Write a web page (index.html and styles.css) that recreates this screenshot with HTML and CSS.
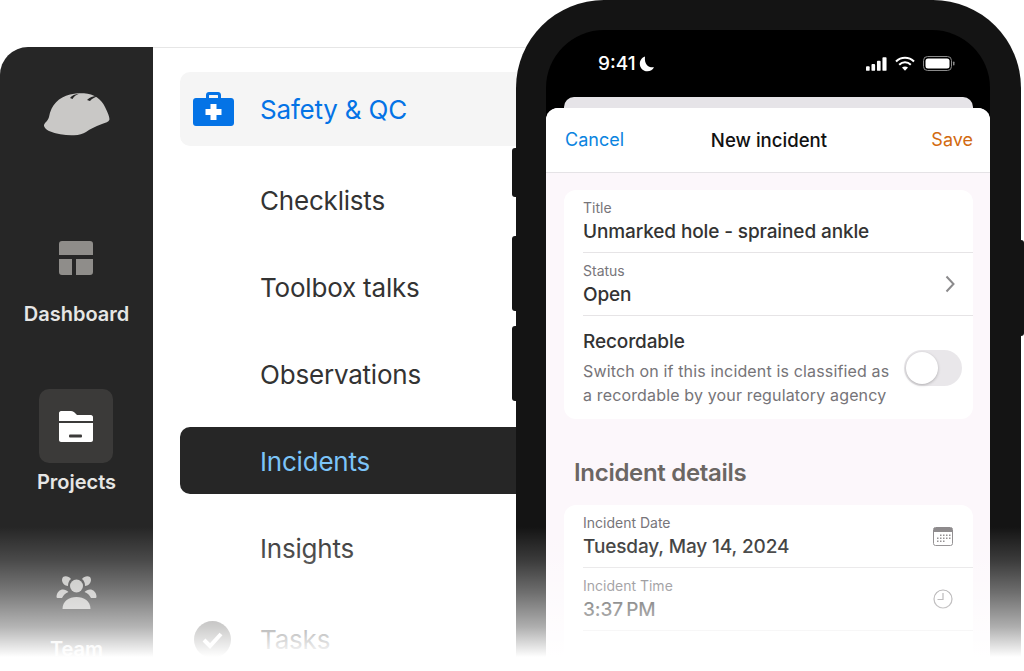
FILE: index.html
```html
<!DOCTYPE html>
<html lang="en">
<head>
<meta charset="utf-8">
<title>New incident</title>
<link rel="stylesheet" href="styles.css">
</head>
<body>
<div class="canvas">
  <section class="panel">
    <nav class="rail">
      <svg class="logo" viewBox="0 0 66 44" aria-hidden="true"><path fill="#c9c8c6" d="M0 32C1 29 4 28 5 24C7 12 15 4 26 1.500C31 0.300 36 0 40 0.300C50 1 57 6 61 14C64 20 66 25 65.300 27C64.500 29 62 29.500 58 31C52 33 46 36 42 39C39 41 35 42 30 42.300C23 42.700 13 41.500 5 38C2 36.700 -0.500 34 0 32Z"/><path fill="#262626" d="M26 5C28 2.500 31 1 35 0.800C32 2 30 3.500 28.500 6C27.500 5.700 27 5.300 26 5ZM43 7C46 4 50 2.500 55 3C51 4 48 5.500 46 8C45 7.500 44 7.200 43 7Z"/></svg>
      <a class="rail-item rail-dash">
        <span class="rail-icon"><svg viewBox="0 0 34 34" width="34" height="34" aria-hidden="true"><path fill="#8f8d8a" d="M3 0H31A3 3 0 0 1 34 3V14H0V3A3 3 0 0 1 3 0ZM0 18H13V34H3A3 3 0 0 1 0 31ZM17 18H34V31A3 3 0 0 1 31 34H17Z"/></svg></span>
        <span class="rail-label">Dashboard</span>
      </a>
      <a class="rail-item rail-projects">
        <span class="rail-icon rail-icon-active"><svg viewBox="0 0 34 31" width="34" height="31" aria-hidden="true"><path fill="#fff" d="M2 0H12C14 0 15 1 16 2L18 4H32C33 4 34 5 34 6V10H0V2C0 1 1 0 2 0ZM0 12H34V29C34 30 33 31 32 31H2C1 31 0 30 0 29Z"/><rect x="10" y="23.500" width="13" height="3" rx="1" fill="#3b3a39"/></svg></span>
        <span class="rail-label rail-label-strong">Projects</span>
      </a>
      <a class="rail-item rail-team">
        <span class="rail-icon"><svg viewBox="0 0 41 34" width="41" height="34" aria-hidden="true"><g fill="#bdbcba"><circle cx="20.500" cy="10" r="6.500"/><path d="M6.500 33C6.500 25 13 21 20.500 21S34.500 25 34.500 33Z"/><path d="M7 1C9 -0.500 13 0 15 3C13 4.500 12 7 12 10C9 10 6 7 6 4C6 3 6.300 2 7 1Z"/><path d="M34 1C32 -0.500 28 0 26 3C28 4.500 29 7 29 10C32 10 35 7 35 4C35 3 34.700 2 34 1Z"/><path d="M0.500 21C0.500 16 4 13.500 7 13.500C9 13.500 11 14.500 12.500 16C9.500 17 7.500 19 6 22H2C1 22 0.500 21.500 0.500 21Z"/><path d="M40.500 21C40.500 16 37 13.500 34 13.500C32 13.500 30 14.500 28.500 16C31.500 17 33.500 19 35 22H39C40 22 40.500 21.500 40.500 21Z"/></g></svg></span>
        <span class="rail-label">Team</span>
      </a>
    </nav>
    <div class="menu">
      <a class="menu-item menu-current">
        <svg class="menu-icon" viewBox="0 0 41 34" width="41" height="34" aria-hidden="true"><path fill="#0473e6" fill-rule="evenodd" d="M13 6V3C13 1.300 14.300 0 16 0H25C26.700 0 28 1.300 28 3V6H38C39.700 6 41 7.300 41 9V31C41 32.700 39.700 34 38 34H3C1.300 34 0 32.700 0 31V9C0 7.300 1.300 6 3 6ZM16 6H25V3.500C25 3.200 24.800 3 24.500 3H16.500C16.200 3 16 3.200 16 3.500Z"/><path fill="#fff" d="M17.500 12H23.500V17H28.500V23H23.500V28H17.500V23H12.500V17H17.500Z"/></svg>
        <span>Safety &amp; QC</span>
      </a>
      <a class="menu-item">Checklists</a>
      <a class="menu-item">Toolbox talks</a>
      <a class="menu-item">Observations</a>
      <a class="menu-item menu-selected">Incidents</a>
      <a class="menu-item">Insights</a>
      <a class="menu-item menu-tasks">
        <svg class="menu-icon" viewBox="0 0 37 37" width="37" height="37" aria-hidden="true"><circle cx="18.500" cy="18.500" r="18.500" fill="#6f6e6c"/><path d="M10 19L16 25L27 13" fill="none" stroke="#fff" stroke-width="4"/></svg>
        <span>Tasks</span>
      </a>
    </div>
  </section>

  <section class="phone">
    <i class="side-btn btn-a"></i><i class="side-btn btn-b"></i><i class="side-btn btn-c"></i><i class="side-btn btn-d"></i>
    <div class="screen">
      <header class="status">
        <span class="clock">9:41</span>
        <svg class="moon" viewBox="0 0 16 16" width="16" height="16" aria-hidden="true"><path fill="#fff" d="M6 0.500C3 1.500 0.800 4.300 0.800 7.700C0.800 12 4.200 15.300 8.300 15.300C11.300 15.300 13.800 13.600 15 11.200C10 12 5 9 6 0.500Z"/></svg>
        <span class="status-icons">
          <svg viewBox="0 0 23 15" width="21" height="14" aria-hidden="true"><g fill="#fff"><rect x="0" y="10" width="4" height="5" rx="1"/><rect x="6" y="7.500" width="4" height="7.500" rx="1"/><rect x="12" y="4" width="4" height="11" rx="1"/><rect x="18" y="0" width="4.500" height="15" rx="1"/></g></svg>
          <svg viewBox="0 0 20 15" width="20" height="15" aria-hidden="true"><g fill="none" stroke="#fff" stroke-width="2"><path d="M1 5.500C6 0.500 14 0.500 19 5.500"/><path d="M4.200 8.700C7.500 5.500 12.500 5.500 15.800 8.700"/></g><path fill="#fff" d="M7 11.500C8.800 10 11.200 10 13 11.500L10 14.800Z"/></svg>
          <svg viewBox="0 0 32 15" width="32" height="15" aria-hidden="true"><rect x="0.500" y="0.500" width="28" height="14" rx="4" fill="none" stroke="#8a8a8a"/><rect x="2.500" y="2.500" width="24" height="10" rx="2.500" fill="#fff"/><rect x="30" y="5.500" width="1.500" height="4" rx="0.700" fill="#8a8a8a"/></svg>
        </span>
      </header>
      <div class="sheet-back"></div>
      <div class="sheet">
        <div class="nav">
          <span class="nav-cancel">Cancel</span>
          <strong class="nav-title">New incident</strong>
          <span class="nav-save">Save</span>
        </div>
        <div class="form">
          <div class="card">
            <div class="row">
              <div class="field"><span class="label">Title</span><span class="value">Unmarked hole - sprained ankle</span></div>
            </div>
            <div class="row">
              <div class="field"><span class="label">Status</span><span class="value">Open</span></div>
              <svg class="chev" viewBox="0 0 10 18" width="10" height="18" aria-hidden="true"><path d="M1.500 1.500L8.500 9L1.500 16.500" fill="none" stroke="#8b8a8c" stroke-width="2"/></svg>
            </div>
            <div class="row row-toggle">
              <div class="field">
                <span class="value value-plain">Recordable</span>
                <span class="desc">Switch on if this incident is classified as a recordable by your regulatory agency</span>
              </div>
              <span class="toggle"><span class="knob"></span></span>
            </div>
          </div>
          <h2 class="section-title">Incident details</h2>
          <div class="card">
            <div class="row">
              <div class="field"><span class="label">Incident Date</span><span class="value">Tuesday, May 14, 2024</span></div>
              <svg class="row-icon" viewBox="0 0 20 19" width="20" height="19" aria-hidden="true"><rect x="0.500" y="0.500" width="19" height="18" rx="2" fill="#fff" stroke="#8d8a8c"/><path d="M1 1H19V5H1Z" fill="#8d8a8c"/><g fill="#8d8a8c"><rect x="7" y="7.500" width="1.500" height="1.500"/><rect x="10" y="7.500" width="1.500" height="1.500"/><rect x="13" y="7.500" width="1.500" height="1.500"/><rect x="16" y="7.500" width="1.500" height="1.500"/><rect x="4" y="10.500" width="1.500" height="1.500"/><rect x="7" y="10.500" width="1.500" height="1.500"/><rect x="10" y="10.500" width="1.500" height="1.500"/><rect x="13" y="10.500" width="1.500" height="1.500"/><rect x="16" y="10.500" width="1.500" height="1.500"/><rect x="4" y="13.500" width="1.500" height="1.500"/><rect x="7" y="13.500" width="1.500" height="1.500"/><rect x="10" y="13.500" width="1.500" height="1.500"/></g></svg>
            </div>
            <div class="row">
              <div class="field"><span class="label">Incident Time</span><span class="value">3:37&#8201;PM</span></div>
              <svg class="row-icon" viewBox="0 0 20 20" width="20" height="20" aria-hidden="true"><circle cx="10" cy="10" r="9" fill="none" stroke="#8d8a8c" stroke-width="1.200"/><path d="M10 4V10.500H4.500" fill="none" stroke="#8d8a8c" stroke-width="1.200"/></svg>
            </div>
            <div class="row">
              <div class="field"><span class="label">Incident location</span></div>
            </div>
          </div>
        </div>
      </div>
    </div>
  </section>
  <div class="fade"></div>
</div>
</body>
</html>
```

FILE: styles.css
```css
* { box-sizing: border-box; }
html, body { margin: 0; height: 100%; background: #fff; overflow: hidden; }
body { font-family: Inter, "Liberation Sans", sans-serif; color: #262626; }
a { color: inherit; text-decoration: none; }
h2 { margin: 0; }

.canvas { position: relative; width: 1024px; height: 671px; overflow: hidden; }

/* background window */
.panel {
  position: absolute; left: 0; top: 47px; width: 540px; height: 624px;
  display: flex; border-top-left-radius: 28px;
  overflow: hidden; background: #fff;
}
.rail {
  width: 153px; flex: none; background: #262626; display: flex; flex-direction: column;
  align-items: center; padding-top: 46px;
}
.logo { width: 66px; height: 44px; flex: none; display: block; }
.rail-item { display: flex; flex-direction: column; align-items: center; flex: none; }
.rail-dash { margin-top: 104px; }
.rail-projects { margin-top: 61px; }
.rail-team { margin-top: 80px; }
.rail-icon { display: flex; align-items: center; justify-content: center; width: 74px; height: 74px; border-radius: 10px; flex: none; }
.rail-dash .rail-icon { height: 34px; }
.rail-team .rail-icon { height: 34px; }
.rail-icon-active { background: #3b3a39; }
.rail-label { font-size: 20px; line-height: 28px; font-weight: 600; color: #e6e6e5; margin-top: 25px; }
.rail-label-strong { margin-top: 5px; }
.rail-team .rail-label { margin-top: 25px; }

.menu { flex: 1; display: flex; flex-direction: column; padding: 24px 0 0 27px; border-top: 1px solid #e6e6e6; }
.menu-item {
  display: flex; align-items: center; flex: none; height: 67px; margin-bottom: 20px; padding: 2px 0 0 80px;
  font-size: 26px; line-height: 32px; color: #333; border-radius: 10px 0 0 10px; position: relative; letter-spacing: -0.2px;
}
.menu-current { height: 74px; margin-bottom: 20px; background: #f5f5f5; color: #0473e6; padding-left: 13px; }
.menu-current .menu-icon { margin: -2px 26px 0 0; flex: none; }
.menu-selected { background: #262626; color: #7cc4f8; }
.menu-tasks { padding-left: 14px; margin-top: 4px; }
.menu-tasks .menu-icon { margin-right: 29px; flex: none; }

/* phone */
.phone {
  position: absolute; left: 516px; top: 0; width: 505px; height: 760px;
  background: #141414; border-radius: 88px 88px 0 0; padding: 30px 31px 0 30px;
}
.side-btn { position: absolute; background: #141414; display: block; }
.btn-a { left: -4px; top: 148px; width: 4px; height: 49px; border-radius: 3px 0 0 3px; }
.btn-b { left: -4px; top: 236px; width: 4px; height: 75px; border-radius: 3px 0 0 3px; }
.btn-c { left: -4px; top: 326px; width: 4px; height: 75px; border-radius: 3px 0 0 3px; }
.btn-d { right: -3px; top: 240px; width: 3px; height: 96px; border-radius: 0 3px 3px 0; }
.screen {
  position: relative; height: 100%; background: #000; border-radius: 58px 58px 0 0; display: flex; flex-direction: column; overflow: hidden;
}
.status { display: flex; align-items: center; height: 67px; padding: 0 35px 0 52px; flex: none; }
.clock { color: #fff; font-size: 19px; font-weight: 500; line-height: 24px; }
.moon { margin-left: 3px; }
.status-icons { margin-left: auto; display: flex; align-items: center; gap: 8px; }
.sheet-back { height: 20px; margin: 0 17px -9px 18px; background: #e6e4e8; border-radius: 10px 10px 0 0; flex: none; }
.sheet { position: relative; flex: 1; background: #fcf7fb; border-radius: 12px 12px 0 0; overflow: hidden; }
.nav {
  display: grid; grid-template-columns: 1fr auto 1fr; align-items: center; height: 65px; padding: 0 17px 0 19px;
  background: #fff; border-bottom: 1px solid #e5e3e6; font-size: 18px; line-height: 24px;
}
.nav-cancel { color: #0a84e0; }
.nav-title { font-size: 18.6px; font-weight: 500; color: #111; }
.nav-save { color: #d26a10; text-align: right; }
.form { padding: 17px 17px 0 18px; }
.card { background: #fff; border-radius: 12px; padding-left: 19px; }
.row {
  display: flex; align-items: center; justify-content: space-between; height: 63px; padding: 0 19px 0 0;
  border-bottom: 1px solid #e6e4e6;
}
.card .row:last-child { border-bottom: 0; }
.field { display: flex; flex-direction: column; min-width: 0; }
.label { font-size: 14px; line-height: 20px; color: #77757a; }
.value { font-size: 19px; line-height: 24px; font-weight: 500; color: #333; margin-top: 2px; letter-spacing: -0.12px; }
.value-plain { margin-top: 0; }
.desc { font-size: 16px; line-height: 24px; color: #767478; margin-top: 5px; letter-spacing: 0.15px; }
.row-toggle { height: 103px; align-items: flex-start; padding: 14px 11px 0 0; gap: 14px; }
.toggle { flex: none; width: 58px; height: 36px; border-radius: 18px; background: #e9e7ea; margin-top: 20px; padding: 2px; }
.knob { display: block; width: 32px; height: 32px; border-radius: 50%; background: #fff; box-shadow: 0 1px 3px rgba(0,0,0,.25); }
.chev { margin-right: -1px; }
.row-icon { margin-right: 1px; }
.section-title { font-size: 24px; line-height: 30px; font-weight: 600; color: #6b6663; padding: 39px 0 17px 10px; letter-spacing: -0.3px; }

/* bottom fade */
.fade {
  position: absolute; left: 0; right: 0; top: 527px; height: 144px;
  background: linear-gradient(to bottom, rgba(255,255,255,0) 0, rgba(255,255,255,.166) 33px, rgba(255,255,255,.387) 66px, rgba(255,255,255,.66) 100px, #fff 130px);
}
```
